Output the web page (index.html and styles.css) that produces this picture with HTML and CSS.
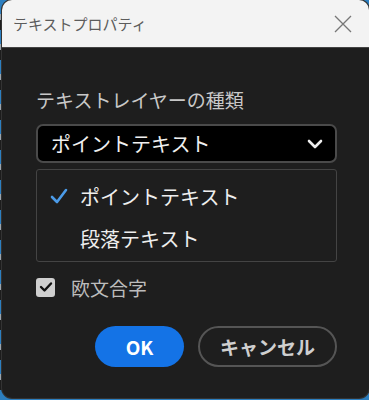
FILE: index.html
```html
<!DOCTYPE html>
<html lang="ja">
<head>
    <meta charset="UTF-8">
    <title>テキストプロパティ</title>
    <link rel="stylesheet" href="styles.css">
</head>
<body>
    <div class="dialog">
        <!-- title bar -->
        <div class="titlebar">
            <span class="title">テキストプロパティ</span>
            <svg class="close" width="18" height="18" viewBox="0 0 18 18">
                <path d="M1 1 L17 17 M17 1 L1 17" stroke="#777" stroke-width="1.3" fill="none"/>
            </svg>
        </div>

        <div class="content">
            <div class="label">テキストレイヤーの種類</div>

            <div class="select">
                <span>ポイントテキスト</span>
                <svg width="16" height="12" viewBox="0 0 16 12">
                    <path d="M2 3 L8 9 L14 3" stroke="#eee" stroke-width="2.6" fill="none" stroke-linecap="round" stroke-linejoin="round"/>
                </svg>
            </div>

            <!-- dropdown options -->
            <div class="options">
                <div class="option">
                    <svg class="tick" width="18" height="16" viewBox="0 0 18 16">
                        <path d="M2 9 L7 14 L16 2" stroke="#4b9be8" stroke-width="2.6" fill="none" stroke-linecap="round" stroke-linejoin="round"/>
                    </svg>
                    <span>ポイントテキスト</span>
                </div>
                <div class="option">
                    <span class="tick"></span>
                    <span>段落テキスト</span>
                </div>
            </div>

            <label class="check">
                <span class="box">
                    <svg width="14" height="12" viewBox="0 0 14 12">
                        <path d="M2 6 L5.5 9.5 L12 2.5" stroke="#111" stroke-width="2.4" fill="none" stroke-linecap="round" stroke-linejoin="round"/>
                    </svg>
                </span>
                <span>欧文合字</span>
            </label>

            <div class="buttons">
                <button class="btn ok">OK</button>
                <button class="btn cancel">キャンセル</button>
            </div>
        </div>
    </div>
</body>
</html>
```

FILE: styles.css
```css
body {
    margin: 0;
    padding: 0;
    height: 400px;
    overflow: hidden;
    background: repeating-linear-gradient(180deg, #2c7fc0 0 14px, #9aa4ad 14px 20px, #1d1d1d 20px 30px);
    font-family: "Noto Sans CJK JP", "Noto Sans", sans-serif;
}
.dialog {
    margin-left: 2px;
    height: 398px;
    background-color: #1e1e1e;
    border-radius: 10px;
    overflow: hidden;
    box-shadow: 0 0 0 1px #333;
}
.titlebar {
    height: 47px;
    background-color: #f3f3f3;
    border-bottom: 1px solid #444;
    display: flex;
    align-items: center;
    justify-content: space-between;
    padding: 0 17px 0 11px;
}
.title {
    font-size: 15px;
    color: #5c5c5c;
}
.close {
    margin-top: 1px;
}
.content {
    padding: 40px 32px 0 34px;
}
.label {
    font-size: 19px;
    color: #c8c8c8;
    line-height: 24px;
}
.select {
    margin-top: 12px;
    height: 35px;
    background-color: #000;
    border: 2px solid #4a4a4a;
    border-radius: 7px;
    display: flex;
    align-items: center;
    justify-content: space-between;
    padding: 0 12px 0 13px;
    font-size: 20px;
    color: #f0f0f0;
}
.options {
    margin-top: 6px;
    height: 93px;
    border: 1px solid #444;
    border-radius: 3px;
    padding: 5px 0 0 13px;
    box-sizing: border-box;
}
.option {
    display: flex;
    align-items: center;
    height: 42px;
    font-size: 20px;
    color: #eee;
}
.tick {
    width: 18px;
    margin-right: 12px;
}
.check {
    margin-top: 15px;
    height: 20px;
    display: flex;
    align-items: center;
    font-size: 19px;
    color: #bcbcbc;
}
.box {
    width: 19px;
    height: 19px;
    background-color: #cfcfcf;
    border-radius: 3px;
    display: flex;
    align-items: center;
    justify-content: center;
    margin-right: 16px;
}
.buttons {
    margin-top: 29px;
    display: flex;
    justify-content: flex-end;
    gap: 14px;
}
.btn {
    height: 41px;
    border-radius: 21px;
    font-family: "Noto Sans CJK JP", "Noto Sans", sans-serif;
    font-size: 19px;
    font-weight: bold;
    cursor: pointer;
}
.ok {
    width: 89px;
    background-color: #1473e6;
    color: #fff;
    border: none;
}
.cancel {
    width: 139px;
    background-color: #1e1e1e;
    color: #cfcfcf;
    border: 2px solid #555;
}
```
